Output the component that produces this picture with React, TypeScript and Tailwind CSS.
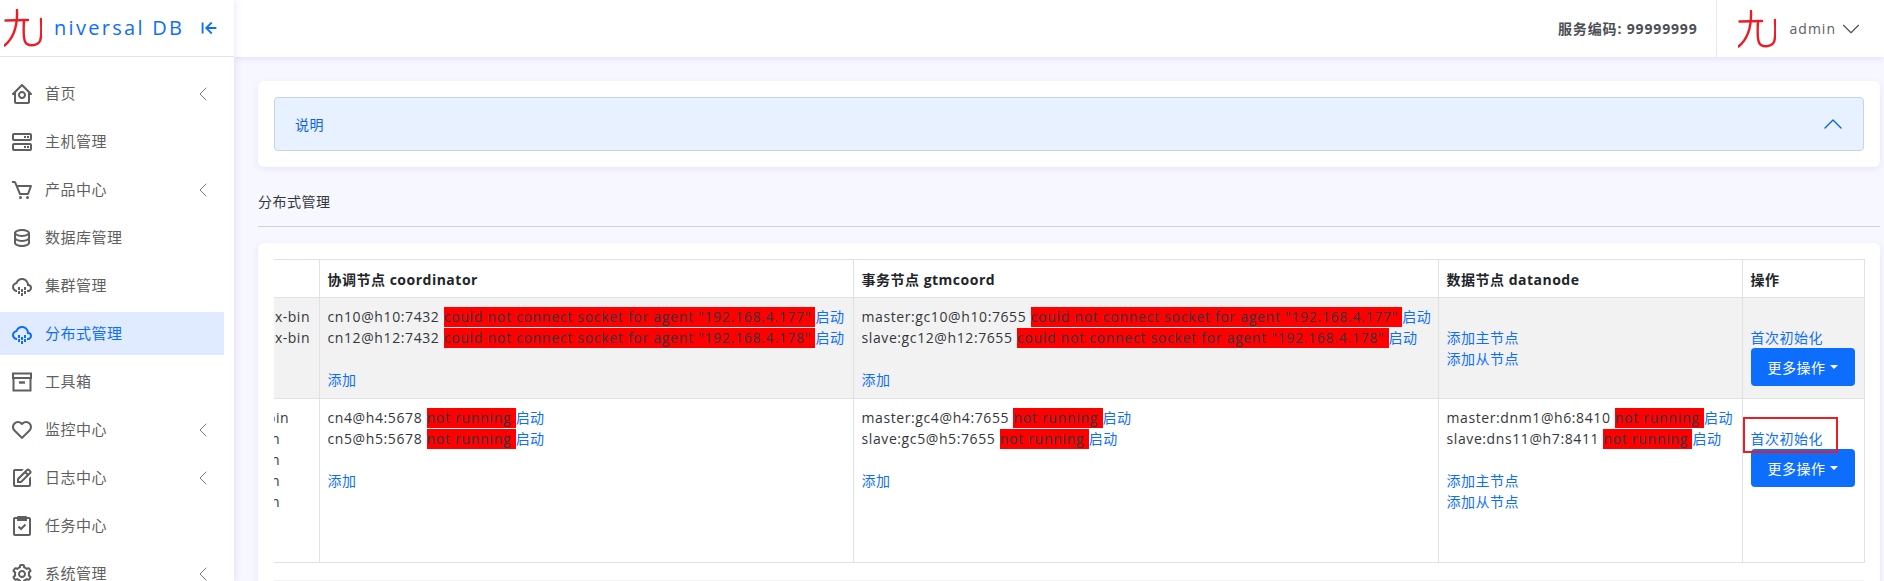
import React from 'react';
import { BiHomeCircle, BiServer, BiCart, BiData, BiCloudDrizzle, BiHeart, BiEdit, BiTask, BiCog, BiArrowToLeft } from 'react-icons/bi';
import { ChevronLeft, ChevronDown, ChevronUp } from 'lucide-react';

const ArchiveIcon: React.FC<{ size?: number }> = ({ size = 24 }) => (
  <svg width={size} height={size} viewBox="0 0 24 24" fill="none" stroke="currentColor" strokeWidth="2">
    <path d="M3 3.5h18v4.5H3z" />
    <path d="M3.5 8v12.5h17V8" />
    <path d="M9 12.5h6" strokeWidth="2.4" />
  </svg>
);

const menu = [
  { label: '首页', icon: BiHomeCircle, sub: true },
  { label: '主机管理', icon: BiServer },
  { label: '产品中心', icon: BiCart, sub: true },
  { label: '数据库管理', icon: BiData },
  { label: '集群管理', icon: BiCloudDrizzle },
  { label: '分布式管理', icon: BiCloudDrizzle, active: true },
  { label: '工具箱', icon: ArchiveIcon },
  { label: '监控中心', icon: BiHeart, sub: true },
  { label: '日志中心', icon: BiEdit, sub: true },
  { label: '任务中心', icon: BiTask },
  { label: '系统管理', icon: BiCog, sub: true },
];

const Logo: React.FC = () => (
  <svg width="38" height="38" viewBox="0 0 38 38" fill="none" stroke="#ed1c24" strokeWidth="2.4" strokeLinecap="round" strokeLinejoin="round">
    <path d="M1.5 11.5 L24 11" />
    <path d="M13 1 C13.5 14 11 28 0.5 36.5" />
    <path d="M20 11 C19.5 20 19 28 21 32.5 C23 37.5 33 37.5 36 32 C37.5 28 37.5 19 37 10" />
  </svg>
);

const Node: React.FC<{ name: string; msg: string }> = ({ name, msg }) => (
  <div className="whitespace-nowrap">
    <span className="tracking-[0.6px]">{name} </span>
    <span className="inline-block h-5 leading-[19px] bg-[#ff0000] align-top mt-px whitespace-pre tracking-[0.72px]">{msg}</span>
    <a className="text-[#0d6efd]">启动</a>
  </div>
);

const Links: React.FC<{ items: string[] }> = ({ items }) => (
  <>
    {items.map((t) => (
      <div key={t} className="text-[#0d6efd]">{t}</div>
    ))}
  </>
);

const Blank = () => <div className="h-[21px]" />;

const Clipped: React.FC<{ text: string; w: string }> = ({ text, w }) => (
  <div className={`flex justify-end whitespace-nowrap ${w}`}>{text}</div>
);

const MoreButton = () => (
  <button className="flex items-center justify-center gap-1 w-[104px] h-[38px] rounded bg-[#0d6efd] text-white">
    更多操作
    <span className="w-0 h-0 border-x-4 border-x-transparent border-t-4 border-t-white" />
  </button>
);

const cell = 'border border-[#dee2e6] px-2 pt-2 pb-2 align-top overflow-hidden';
const head = 'border border-[#dee2e6] px-2 pt-[9px] pb-[7px] text-left align-top font-bold text-[#212529]';
const noLeft = 'border-b border-[#dee2e6] p-0 pt-2 align-top overflow-hidden';

const agentErr = 'could not connect socket for agent "192.168.4.177" ';
const agentErr2 = 'could not connect socket for agent "192.168.4.178" ';

const App: React.FC = () => {
  return (
    <div className="flex h-[581px] w-[1884px] overflow-hidden bg-[#f7f7ff] text-sm leading-[21px] tracking-[0.5px] text-[#33373b] font-['Open_Sans','Noto_Sans_CJK_SC',sans-serif]">
      <aside className="w-[234px] shrink-0 bg-white shadow-[0_0_8px_rgba(90,70,230,0.16)] z-10">
        <div className="flex items-center h-[57px] border-b border-[#e4e4e7] pl-1">
          <Logo />
          <span className="ml-[12px] text-xl tracking-[2.3px] text-[#0d6efd]">niversal DB</span>
          <BiArrowToLeft className="ml-[14px] text-[#0d6efd]" size={22} />
        </div>
        <nav className="pt-[15px]">
          {menu.map((m) => {
            const Icon = m.icon;
            return (
              <div
                key={m.label}
                className={`flex items-center w-[224px] h-[43px] mb-[5px] pl-[10px] text-[15px] ${m.active ? 'bg-[#e0ebff] text-[#0d6efd]' : 'text-[#5f5f5f]'}`}
              >
                <Icon size={24} />
                <span className="ml-[11px] flex-1">{m.label}</span>
                {m.sub && <ChevronLeft className="mr-[9px] text-[#777]" size={24} strokeWidth={1} />}
              </div>
            );
          })}
        </nav>
      </aside>

      <div className="flex-1 min-w-0">
        <header className="flex items-center justify-end h-[57px] bg-white shadow-[0_2px_6px_rgba(90,70,230,0.12)]">
          <span className="font-bold text-[#4b4f54] mr-[18px] tracking-[0.85px]">服务编码: 99999999</span>
          <div className="flex items-center h-full border-l border-[#e8e8ec] pl-[21px] pr-[18px]">
            <div className="w-[36px] overflow-visible"><Logo /></div>
            <span className="ml-[16px] text-[#5a5e63] tracking-[1px]">admin</span>
            <ChevronDown className="text-[#4b4f54]" size={30} strokeWidth={0.9} />
          </div>
        </header>

        <main className="pl-[24px] pr-[4px] pt-[24px]">
          <section className="bg-white rounded-md p-4 shadow-[0_2px_6px_rgba(90,70,230,0.1)]">
            <div className="flex items-center justify-between h-[54px] pl-[20px] pr-[14px] rounded-sm border border-[#c9d4e2] bg-[#e7f1ff] text-[#0c63e4]">
              <span>说明</span>
              <ChevronUp className="text-[#0c63e4]" size={32} strokeWidth={1} />
            </div>
          </section>

          <h6 className="mt-[24px] h-[21px] leading-[21px]">分布式管理</h6>
          <hr className="mt-[14px] mb-[16px] border-[#cfd2d6]" />

          <section className="bg-white rounded-md p-4 h-[400px] shadow-[0_2px_6px_rgba(90,70,230,0.1)]">
            <table className="table-fixed w-[1590px] border-collapse">
              <colgroup>
                <col className="w-[45px]" />
                <col className="w-[534px]" />
                <col className="w-[585px]" />
                <col className="w-[304px]" />
                <col className="w-[122px]" />
              </colgroup>
              <thead>
                <tr className="h-[38px]">
                  <th className="border-y border-[#dee2e6]" />
                  <th className={head}>协调节点 coordinator</th>
                  <th className={head}>事务节点 gtmcoord</th>
                  <th className={head}>数据节点 datanode</th>
                  <th className={head}>操作</th>
                </tr>
              </thead>
              <tbody>
                <tr className="h-[101px] bg-[#f2f2f2]">
                  <td className={noLeft}>
                    <Clipped text="x-bin" w="w-[36px]" />
                    <Clipped text="x-bin" w="w-[36px]" />
                  </td>
                  <td className={cell}>
                    <Node name="cn10@h10:7432" msg={agentErr} />
                    <Node name="cn12@h12:7432" msg={agentErr2} />
                    <Blank />
                    <Links items={['添加']} />
                  </td>
                  <td className={cell}>
                    <Node name="master:gc10@h10:7655" msg={agentErr} />
                    <Node name="slave:gc12@h12:7655" msg={agentErr2} />
                    <Blank />
                    <Links items={['添加']} />
                  </td>
                  <td className={cell}>
                    <Blank />
                    <Links items={['添加主节点', '添加从节点']} />
                  </td>
                  <td className={cell}>
                    <Blank />
                    <Links items={['首次初始化']} />
                    <MoreButton />
                  </td>
                </tr>
                <tr className="h-[164px]">
                  <td className={noLeft}>
                    <Clipped text="bin" w="w-[15px]" />
                    <Clipped text="n" w="w-[6px]" />
                    <Clipped text="n" w="w-[6px]" />
                    <Clipped text="n" w="w-[6px]" />
                    <Clipped text="n" w="w-[6px]" />
                  </td>
                  <td className={cell}>
                    <Node name="cn4@h4:5678" msg="not running " />
                    <Node name="cn5@h5:5678" msg="not running " />
                    <Blank />
                    <Links items={['添加']} />
                  </td>
                  <td className={cell}>
                    <Node name="master:gc4@h4:7655" msg="not running " />
                    <Node name="slave:gc5@h5:7655" msg="not running " />
                    <Blank />
                    <Links items={['添加']} />
                  </td>
                  <td className={cell}>
                    <Node name="master:dnm1@h6:8410" msg="not running " />
                    <Node name="slave:dns11@h7:8411" msg="not running " />
                    <Blank />
                    <Links items={['添加主节点', '添加从节点']} />
                  </td>
                  <td className={`${cell} relative`}>
                    <Blank />
                    <Links items={['首次初始化']} />
                    <MoreButton />
                    <div className="absolute left-0 top-[18px] w-[95px] h-[36px] border-2 border-[#ed1c24]" />
                  </td>
                </tr>
              </tbody>
            </table>
            <div className="mt-[17px] h-[17px] bg-[#f1f1f1]" />
          </section>
        </main>
      </div>
    </div>
  );
};

export default App;
